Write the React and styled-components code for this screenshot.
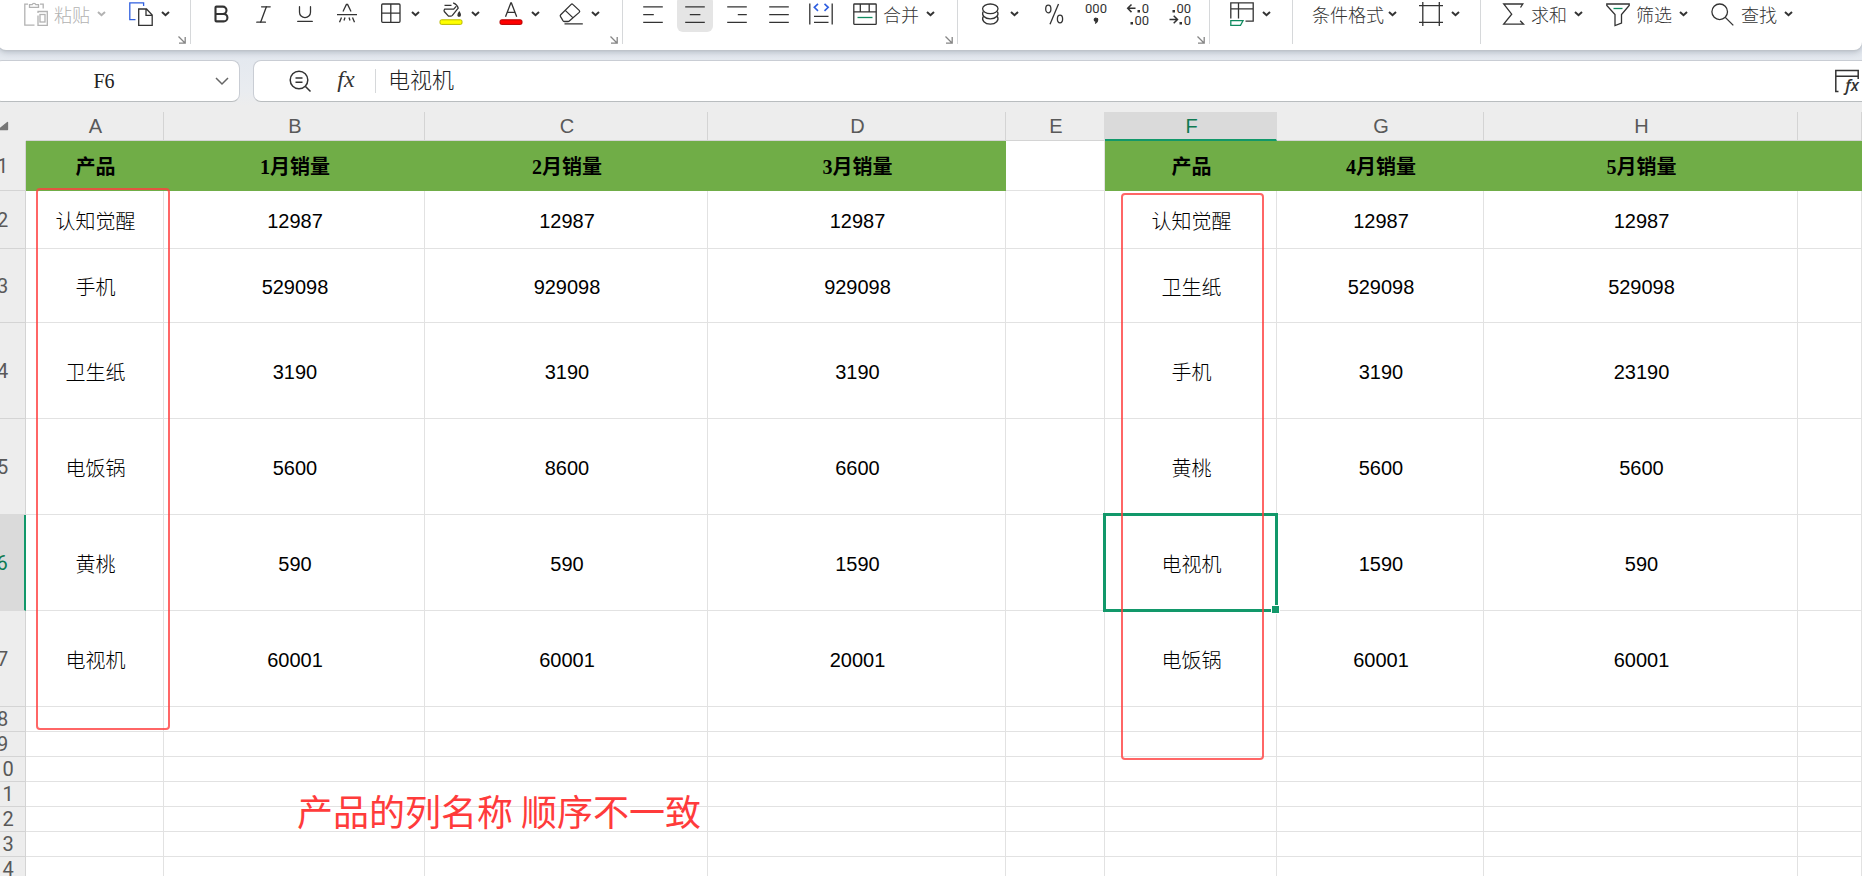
import React from "react";
import styled, { createGlobalStyle, css } from "styled-components";
import { Bold, Italic, Underline } from "lucide-react";

const GlobalStyle = createGlobalStyle`
  * {
    box-sizing: border-box;
  }
  body {
    margin: 0;
    overflow: hidden;
    font-family: "Liberation Sans", "Noto Sans CJK SC", sans-serif;
  }
  button, input {
    font: inherit;
    color: inherit;
    border: 0;
    margin: 0;
    padding: 0;
    background: none;
    outline: none;
  }
`;

const Page = styled.div`
  display: flex;
  flex-direction: column;
  height: 100vh;
  overflow: hidden;
  background: linear-gradient(#e3e8ef 50px, #e9ecf0 90px, #ededed 106px);
`;

/* ---------- toolbar ---------- */

const Toolbar = styled.div`
  display: flex;
  flex: none;
  height: 54px;
  margin: -4px 0 0 -2px;
  padding-left: 2px;
  background: #fff;
  border-radius: 0 0 8px 8px;
  box-shadow: 0 1px 1px #bfc4ca, 0 2px 6px rgba(60, 70, 85, 0.3);
`;

const Group = styled.div`
  position: relative;
  display: flex;
  flex: none;
  justify-content: ${(p) => (p.$spread ? "space-between" : "flex-start")};
  gap: ${(p) => p.$gap || 0}px;
  width: ${(p) => (p.$width ? `${p.$width}px` : "auto")};
  height: 48px;
  padding: 0 8px 0 ${(p) => p.$pad || 9}px;
  border-right: ${(p) => (p.$width ? "1px solid #d6d8da" : "0")};
`;

const Cluster = styled.div`
  display: flex;
`;

const IconButton = styled.button`
  display: flex;
  align-items: center;
  justify-content: center;
  width: 36px;
  height: 36px;
  margin: 0 3px;
  border-radius: 6px;
  color: #333;
  background: ${(p) => (p.$active ? "#e5e5e5" : "transparent")};
`;

const DropButton = styled.button`
  display: flex;
  align-items: center;
  height: 36px;
  padding: 0 8px 0 11px;
  color: ${(p) => (p.disabled ? "#b2b2b2" : "#333")};
`;

const Label = styled.span`
  margin: 0 ${(p) => (p.$tight ? 4 : 7)}px 0 ${(p) => (p.$tight ? 0 : 6)}px;
  font-family: "Noto Sans CJK SC", sans-serif;
  font-size: 18px;
  font-weight: 300;
  line-height: 24px;
  white-space: nowrap;
`;

const IconSlot = styled.span`
  display: flex;
  margin-right: 8px;
`;

const LauncherButton = styled.button`
  position: absolute;
  right: 4px;
  bottom: 0;
  display: flex;
`;

const Svg = styled.svg`
  display: block;
  flex: none;
  overflow: visible;
  fill: none;
  stroke: currentColor;
  stroke-width: 1.3;
  text {
    fill: currentColor;
    stroke: none;
  }
`;

const LauncherArrow = styled(Svg)`
  color: #858585;
`;

const Icon = ({ children }) => (
  <Svg width="24" height="24" viewBox="0 0 24 24" aria-hidden="true">
    {children}
  </Svg>
);

const Chevron = () => (
  <Svg width="9" height="6" viewBox="0 0 9 6" aria-hidden="true">
    <path d="M1 1l3.5 3.2L8 1" strokeWidth="2" />
  </Svg>
);

const Launcher = () => (
  <LauncherButton aria-label="更多设置">
    <LauncherArrow width="8" height="8" viewBox="0 0 8 8">
      <path d="M.5.5L6.5 6.5M7.2 1v6.2H1" />
    </LauncherArrow>
  </LauncherButton>
);

const PasteIcon = () => (
  <Icon>
    <path d="M4 2.2H.8V23.2H10.5M16 2.2h3.2V6.5M5.5 5.3V2.7h2.6a2 2 0 0 1 3.8 0h2.6v2.6zM14 13.5V23.3h9.3V9.5H14v1.5" />
    <rect x="16" y="12.5" width="5" height="7.5" />
  </Icon>
);

const CopyIcon = () => (
  <Icon>
    <path d="M14.6 4V.8H.8V17.6H6.5" stroke="#2f5fe0" />
    <path d="M9.7 7h7.8l5.7 6v10.3H9.7zM17 7v6.4h6" />
  </Icon>
);

const StrikeIcon = () => (
  <Icon>
    <path d="M2 12.6h20M8 9.5l3.4-7h1.2l3.4 7M6.5 15.5l-2 4.7M17.5 15.5l2 4.7M10 15.5l-1 3M14 15.5l1 3" />
  </Icon>
);

const BordersIcon = () => (
  <Icon>
    <rect x="2.7" y="2" width="18.3" height="18.3" rx="1" />
    <path d="M11.8 2v18.3M2.7 11.2H21" />
  </Icon>
);

const FillIcon = () => (
  <Icon>
    <path d="M5.5 3.4h7M14.2.8q4.200 1.800 5 5.400l-5.800 7.200q-.8.8-1.800.8H9.500L5.300 9.500q-.6-1 .2-2.100l.2-.2h9l2.500-2.800" />
    <path d="M20.3 10.2c1.4 2 1.4 4-.2 4s-1.300-2 .2-4z" fill="currentColor" />
    <rect x="1" y="17.8" width="22" height="4.6" rx="1.5" fill="#ff0" stroke="#b9b900" strokeWidth="1" />
  </Icon>
);

const FontColorIcon = () => (
  <Icon>
    <path d="M6.500 14.800L11.800 1h.6l5.300 13.800M8.300 10.400h7.600" />
    <rect x="1" y="17.8" width="22" height="4.6" rx="1.5" fill="#f00" stroke="#b00000" strokeWidth="1" />
  </Icon>
);

const EraserIcon = () => (
  <Icon>
    <path d="M1.7 12.8L12.2 2.4q.8-.8 1.6 0l6.4 6q1 1 0 2l-9.6 8.400q-.8.7-1.600.7H5.500q-.8 0-1.400-.7L1.700 15q-1-1.100 0-2.200zM6.500 8.600l7.300 7M5.500 21.800h18.300" />
  </Icon>
);

const ALIGN_PATHS = {
  left: "M2.200 4.800h19.600M2.200 12.600h10.600M2.200 20.300h19.600",
  center: "M2.200 4.800h19.600M6.800 12.600h10.600M2.200 20.300h19.600",
  right: "M2.200 4.800h19.600M12.800 12.600h9M2.200 20.300h19.600",
  justify: "M2.200 4.800h19.600M2.200 12.600h19.600M2.200 20.300h19.600",
};

const AlignIcon = ({ side }) => (
  <Icon>
    <path d={ALIGN_PATHS[side]} />
  </Icon>
);

const SpacingIcon = () => (
  <Icon>
    <path d="M.8 1.5v21M23.2 1.5v21M5 14.3h14.5M5 20.3h14.5" />
    <path d="M9 1.800L5.300 5.300 9 8.800M15.500 1.800l3.700 3.500-3.700 3.500" stroke="#2f5fe0" strokeWidth="1.6" />
  </Icon>
);

const MergeIcon = () => (
  <Icon>
    <rect x=".8" y="2" width="22.4" height="20.3" rx=".6" />
    <path d="M.8 9.8h22.4M7.3 2v7.8M16.2 2v7.8" />
    <path d="M4.5 15.5h15" stroke="#0f8a5f" />
  </Icon>
);

const CoinsIcon = () => (
  <Icon>
    <ellipse cx="12.3" cy="6.8" rx="7.7" ry="4.8" />
    <path d="M5.200 9.500c-2 3.500 1.500 7.300 7.100 7.300s9.100-3.800 7.100-7.300M5.200 14.500c-2 3.800 1.500 7.700 7.100 7.700s9.100-3.900 7.100-7.700" />
  </Icon>
);

const PercentIcon = () => (
  <Icon>
    <ellipse cx="6.3" cy="7" rx="2.6" ry="3.8" />
    <ellipse cx="18" cy="17" rx="2.6" ry="3.8" />
    <path d="M16.5 2L8 22.3" />
  </Icon>
);

const ThousandsIcon = () => (
  <Icon>
    <text x="12" y="11" fontSize="13" textAnchor="middle" fontFamily="Roboto">000</text>
    <path d="M12.300 16.200a1.500 1.500 0 1 0 .1 2.800q0 1.500-1.200 2.500 2.500-1.500 2.500-3.800 0-1.400-1.400-1.500z" fill="currentColor" />
  </Icon>
);

const LessDecimalIcon = () => (
  <Icon>
    <path d="M9.500 6.300H1.700M5.500 2.500L1.700 6.300l3.800 3.800" strokeWidth="1.500" />
    <rect x="11.500" y="8" width="2.500" height="2.500" fill="currentColor" stroke="none" />
    <rect x="4.500" y="20" width="2.500" height="2.500" fill="currentColor" stroke="none" />
    <text x="23" y="11" fontSize="13" textAnchor="end" fontFamily="Roboto">0</text>
    <text x="23" y="23" fontSize="13" textAnchor="end" fontFamily="Roboto">00</text>
  </Icon>
);

const MoreDecimalIcon = () => (
  <Icon>
    <path d="M1.500 17.500h8M5.700 13.700l3.800 3.800-3.800 3.800" strokeWidth="1.500" />
    <rect x="4.500" y="8" width="2.500" height="2.500" fill="currentColor" stroke="none" />
    <rect x="11.500" y="20" width="2.500" height="2.500" fill="currentColor" stroke="none" />
    <text x="23" y="11" fontSize="13" textAnchor="end" fontFamily="Roboto">00</text>
    <text x="23" y="23" fontSize="13" textAnchor="end" fontFamily="Roboto">0</text>
  </Icon>
);

const TableStyleIcon = () => (
  <Icon>
    <path d="M.8 16.5V.8h22.4v18.4H15.5M.8 6.8h22.4M8.5.8v15.7" />
    <path d="M.8 18.7h12.2l-2.5 4.6H.8z" stroke="#0f8a5f" />
  </Icon>
);

const FrameIcon = () => (
  <Icon>
    <path d="M3.8 0v24M20.3 0v24M0 3.7h24M0 20.3h24" />
  </Icon>
);

const SumIcon = () => (
  <Icon>
    <path d="M19.500 5.500L21.800 2H2.700l8 10.200-8 10h19.800l-3.300-3.500" />
  </Icon>
);

const FilterIcon = () => (
  <Icon>
    <path d="M.8 2h22.400v1.500L15.500 12.500v8.500l-6.500 2.500V12.500L.8 3.500z" />
    <path d="M7.5 6.5h9" stroke="#0f8a5f" />
  </Icon>
);

const FindIcon = () => (
  <Icon>
    <circle cx="8.7" cy="9.8" r="7.8" />
    <path d="M14.3 15.4l8 8" />
  </Icon>
);

/* ---------- formula bar ---------- */

const FormulaRow = styled.div`
  display: flex;
  flex: none;
  gap: 13px;
  height: 42px;
  margin: 10px -8px 10px -6px;
`;

const Box = styled.div`
  display: flex;
  align-items: center;
  background: #fff;
  border: 1px solid #c9cdd4;
  border-bottom-color: #b9bdbf;
  border-radius: 8px;
`;

const NameBox = styled(Box)`
  flex: none;
  width: 246px;
  padding-left: 8px;
  input {
    flex: 1;
    min-width: 0;
    font-family: "Liberation Serif", serif;
    font-size: 20px;
    text-align: center;
    color: #222;
  }
  button {
    display: flex;
    justify-content: center;
    width: 34px;
    color: #666;
  }
`;

const FormulaBox = styled(Box)`
  flex: 1;
  min-width: 0;
  padding: 0 10px 0 23px;
  button {
    display: flex;
    justify-content: center;
    width: 46px;
    color: #333;
  }
  input {
    flex: 1;
    min-width: 0;
    height: 24px;
    padding-left: 12px;
    border-left: 1px solid #d6d8da;
    margin-left: 6px;
    font-family: "Liberation Serif", "Noto Sans CJK SC", serif;
    font-size: 22px;
    font-weight: 300;
    line-height: 24px;
    color: #222;
  }
  button:last-child {
    width: 24px;
  }
`;

/* ---------- sheet ---------- */

const Sheet = styled.div`
  position: relative;
  flex: 1;
  min-height: 0;
  overflow: hidden;
  /* the row header strip is partly scrolled off the left edge */
  margin-left: -20px;
`;

const Grid = styled.table`
  width: 100%;
  table-layout: fixed;
  border-collapse: separate;
  border-spacing: 0;
  font-size: 20px;
  line-height: 22px;
  background: #fff;

  th, td {
    padding: 0;
    text-align: center;
    vertical-align: middle;
    overflow: visible;
    white-space: nowrap;
  }
  thead th {
    padding-left: 2px;
  }
  tbody td {
    padding: 2px 0 0 2px;
  }
`;

const Head = styled.th`
  font-weight: 400;
  color: ${(p) => (p.$selected ? "#0f7a52" : "#595959")};
  background: ${(p) => (p.$selected ? "#dadada" : "#ededed")};
`;

const ColHead = styled(Head)`
  height: 29px;
  border-right: 1px solid #d4d4d4;
  border-bottom: 1px solid #d4d4d4;
  ${(p) =>
    p.$selected &&
    css`
      border-right-color: #dadada;
      border-bottom: 2px solid #12986a;
      box-shadow: -1px 0 0 #dadada;
    `}
`;

const Corner = styled(Head)`
  border-bottom: 1px solid #ededed;
  svg {
    margin: 0 auto;
  }
`;

const RowHead = styled(Head)`
  height: ${(p) => p.$height}px;
  font-family: Roboto, sans-serif;
  border-right: 1px solid #d4d4d4;
  border-bottom: 1px solid #d4d4d4;
  ${(p) =>
    p.$selected &&
    css`
      border-right: 2px solid #12986a;
      border-bottom-color: #dadada;
      box-shadow: 0 -1px 0 #dadada;
    `}
`;

const Cell = styled.td`
  position: relative;
  color: #000;
  border-right: 1px solid #e2e2e2;
  border-bottom: 1px solid #e2e2e2;
`;

const EmptyCell = styled(Cell)`
  line-height: 0;
`;

const NameCell = styled(Cell)`
  font-family: "Noto Sans CJK SC", sans-serif;
  font-weight: 300;
`;

const TitleCell = styled(Cell)`
  font-family: "Liberation Serif", "Noto Sans CJK SC", serif;
  font-weight: 700;
  background: #70ad47;
  border-color: #70ad47;
`;

const Selection = styled.div`
  position: absolute;
  inset: -2px;
  border: 3px solid #12986a;
  z-index: 1;

  &::after {
    content: "";
    position: absolute;
    right: -5px;
    bottom: -5px;
    width: 7px;
    height: 7px;
    background: #12986a;
    border: 1px solid #fff;
  }
`;

const Frame = styled.div`
  position: absolute;
  z-index: 2;
  top: ${(p) => p.$top}px;
  left: ${(p) => p.$left}px;
  width: ${(p) => p.$width}px;
  height: ${(p) => p.$height}px;
  border: 2px solid rgba(255, 64, 64, 0.8);
  border-radius: 4px;
`;

const Note = styled.div`
  position: absolute;
  z-index: 2;
  top: 674px;
  left: 317px;
  font-family: "Noto Sans CJK SC", sans-serif;
  font-size: 36px;
  line-height: 48px;
  color: #ff3b3b;
  white-space: nowrap;
`;

const COLUMNS = [
  { name: "A", width: 138 },
  { name: "B", width: 261 },
  { name: "C", width: 283 },
  { name: "D", width: 298 },
  { name: "E", width: 99 },
  { name: "F", width: 172 },
  { name: "G", width: 207 },
  { name: "H", width: 314 },
  { name: "" },
];

const TITLES = ["产品", "1月销量", "2月销量", "3月销量", null, "产品", "4月销量", "5月销量", ""];

const ROWS = [
  { height: 58, cells: ["认知觉醒", 12987, 12987, 12987, "", "认知觉醒", 12987, 12987, ""] },
  { height: 74, cells: ["手机", 529098, 929098, 929098, "", "卫生纸", 529098, 529098, ""] },
  { height: 96, cells: ["卫生纸", 3190, 3190, 3190, "", "手机", 3190, 23190, ""] },
  { height: 96, cells: ["电饭锅", 5600, 8600, 6600, "", "黄桃", 5600, 5600, ""] },
  { height: 96, cells: ["黄桃", 590, 590, 1590, "", "电视机", 1590, 590, ""] },
  { height: 96, cells: ["电视机", 60001, 60001, 20001, "", "电饭锅", 60001, 60001, ""] },
  ...Array.from({ length: 7 }, () => ({ height: 25, cells: Array(9).fill("") })),
];

const SELECTED = { row: 6, col: "F" };

const cellFor = (value) => {
  if (value === "") return EmptyCell;
  return typeof value === "string" ? NameCell : Cell;
};

const Tool = ({ label, active, children }) => (
  <IconButton type="button" aria-label={label} $active={active}>
    {children}
  </IconButton>
);

const DropTool = ({ label, children }) => (
  <DropButton type="button" aria-label={label}>
    <IconSlot>{children}</IconSlot>
    <Chevron />
  </DropButton>
);

const TextTool = ({ icon, text, tight, disabled }) => (
  <DropButton type="button" disabled={disabled}>
    {icon}
    <Label $tight={tight}>{text}</Label>
    <Chevron />
  </DropButton>
);

function Ribbon() {
  return (
    <Toolbar>
      <Group $width={191} $pad={13} $gap={4}>
        <TextTool icon={<PasteIcon />} text="粘贴" disabled />
        <DropTool label="复制"><CopyIcon /></DropTool>
        <Launcher />
      </Group>
      <Group $width={432}>
        <Tool label="加粗"><Bold size={22} strokeWidth={2.3} /></Tool>
        <Tool label="倾斜"><Italic size={23} strokeWidth={1.4} /></Tool>
        <Tool label="下划线"><Underline size={22} strokeWidth={1.4} /></Tool>
        <Tool label="删除线"><StrikeIcon /></Tool>
        <DropTool label="边框"><BordersIcon /></DropTool>
        <DropTool label="填充颜色"><FillIcon /></DropTool>
        <DropTool label="字体颜色"><FontColorIcon /></DropTool>
        <DropTool label="清除"><EraserIcon /></DropTool>
        <Launcher />
      </Group>
      <Group $width={335}>
        <Tool label="左对齐"><AlignIcon side="left" /></Tool>
        <Tool label="居中" active><AlignIcon side="center" /></Tool>
        <Tool label="右对齐"><AlignIcon side="right" /></Tool>
        <Tool label="两端对齐"><AlignIcon side="justify" /></Tool>
        <Tool label="分散对齐"><SpacingIcon /></Tool>
        <TextTool icon={<MergeIcon />} text="合并" />
        <Launcher />
      </Group>
      <Group $width={252} $spread>
        <DropTool label="货币"><CoinsIcon /></DropTool>
        <Cluster>
          <Tool label="百分比"><PercentIcon /></Tool>
          <Tool label="千位分隔"><ThousandsIcon /></Tool>
          <Tool label="减少小数位"><LessDecimalIcon /></Tool>
          <Tool label="增加小数位"><MoreDecimalIcon /></Tool>
        </Cluster>
        <Launcher />
      </Group>
      <Group $width={83}>
        <DropTool label="表格样式"><TableStyleIcon /></DropTool>
      </Group>
      <Group $width={188} $pad={8} $gap={3}>
        <TextTool text="条件格式" tight />
        <DropTool label="单元格"><FrameIcon /></DropTool>
      </Group>
      <Group $gap={4}>
        <TextTool icon={<SumIcon />} text="求和" />
        <TextTool icon={<FilterIcon />} text="筛选" />
        <TextTool icon={<FindIcon />} text="查找" />
      </Group>
    </Toolbar>
  );
}

function FormulaBar() {
  return (
    <FormulaRow>
      <NameBox>
        <input aria-label="名称框" defaultValue="F6" />
        <button type="button" aria-label="展开名称">
          <Svg width="14" height="8" viewBox="0 0 14 8">
            <path d="M1 1l6 6 6-6" strokeWidth="1.5" />
          </Svg>
        </button>
      </NameBox>
      <FormulaBox>
        <button type="button" aria-label="浏览公式">
          <Icon>
            <circle cx="11" cy="11" r="8.8" strokeWidth="1.5" />
            <path d="M7.5 9h7M7.5 13.3h7M17.5 17.5l5 5" strokeWidth="1.5" />
          </Icon>
        </button>
        <button type="button" aria-label="插入函数">
          <Icon>
            <text x="12" y="18" fontSize="24" textAnchor="middle" fontFamily="Liberation Serif" fontStyle="italic">
              fx
            </text>
          </Icon>
        </button>
        <input aria-label="编辑栏" defaultValue="电视机" />
        <button type="button" aria-label="函数面板">
          <Icon>
            <path d="M3.5 22.5H.8V1.500h22.400V10M.8 7.300h22.400" strokeWidth="1.5" />
            <text x="17" y="22" fontSize="16" textAnchor="middle" fontFamily="Open Sans" fontStyle="italic" fontWeight="600">fx</text>
          </Icon>
        </button>
      </FormulaBox>
    </FormulaRow>
  );
}

function App() {
  return (
    <>
      <GlobalStyle />
      <Page>
        <Ribbon />
        <FormulaBar />
        <Sheet>
          <Grid>
            <colgroup>
              <col width="46" />
              {COLUMNS.map((c, i) => (
                <col key={i} width={c.width} />
              ))}
            </colgroup>
            <thead>
              <tr>
                <Corner aria-label="全选">
                  <Svg width="16" height="10" viewBox="0 0 16 10">
                    <path d="M11.5 1.5v7H3z" fill="#777" stroke="#777" strokeLinejoin="round" />
                  </Svg>
                </Corner>
                {COLUMNS.map((c, i) => (
                  <ColHead key={i} scope="col" $selected={c.name === SELECTED.col}>
                    {c.name}
                  </ColHead>
                ))}
              </tr>
            </thead>
            <tbody>
              <tr>
                <RowHead scope="row" $height={50}>1</RowHead>
                {TITLES.map((title, i) =>
                  title === null ? <EmptyCell key={i} /> : <TitleCell key={i}>{title}</TitleCell>
                )}
              </tr>
              {ROWS.map((row, r) => (
                <tr key={r}>
                  <RowHead scope="row" $height={row.height} $selected={r + 2 === SELECTED.row}>
                    {r + 2}
                  </RowHead>
                  {row.cells.map((value, i) => {
                    const CellType = cellFor(value);
                    const selected = r + 2 === SELECTED.row && COLUMNS[i].name === SELECTED.col;
                    return (
                      <CellType key={i}>
                        {value}
                        {selected && <Selection />}
                      </CellType>
                    );
                  })}
                </tr>
              ))}
            </tbody>
          </Grid>
          <Frame $top={76} $left={56} $width={134} $height={542} />
          <Frame $top={81} $left={1141} $width={143} $height={567} />
          <Note>产品的列名称 顺序不一致</Note>
        </Sheet>
      </Page>
    </>
  );
}

export default App;
